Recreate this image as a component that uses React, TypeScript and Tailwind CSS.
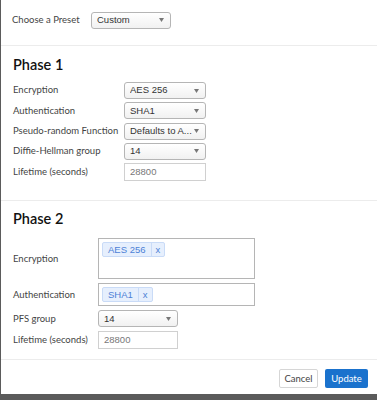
import React from 'react';

const font = { fontFamily: 'Lato, "Liberation Sans", sans-serif' };

const Caret = () => (
  <svg width="5" height="4" viewBox="0 0 5 4" className="flex-shrink-0">
    <path d="M0 0 L5 0 L2.5 4 Z" fill="#777" />
  </svg>
);

const Select: React.FC<{ value: string; width: string }> = ({ value, width }) => (
  <div
    className={`${width} h-[17px] flex items-center justify-between pl-[5px] pr-[6px] border border-[#b5b5b5] rounded-[3px] bg-gradient-to-b from-white to-[#f1f1f1] text-[9.5px] text-[#333] font-['Liberation_Sans',Arial,sans-serif] whitespace-nowrap`}
  >
    <span className="overflow-hidden">{value}</span>
    <Caret />
  </div>
);

const Input: React.FC<{ value: string; width: string }> = ({ value, width }) => (
  <div
    className={`${width} h-[18px] flex items-center pl-[5px] border border-[#d0d0d0] bg-white text-[9.5px] text-[#777] font-['Liberation_Sans',Arial,sans-serif]`}
  >
    {value}
  </div>
);

const Chip: React.FC<{ label: string }> = ({ label }) => (
  <div className="flex h-[15px] items-stretch border border-[#c9dbf7] bg-[#e6effd] rounded-[2px] text-[9.5px] leading-none text-[#4d7fd6] font-['Liberation_Sans',Arial,sans-serif]">
    <span className="flex items-center px-[5px] border-r border-[#c9dbf7]">{label}</span>
    <span className="flex items-center px-[4px]">x</span>
  </div>
);

const Row: React.FC<{ label: string; labelWidth: string; children: React.ReactNode }> = ({ label, labelWidth, children }) => (
  <div className="flex items-center">
    <div className={`${labelWidth} flex-shrink-0 whitespace-nowrap text-[9.5px] text-[#444]`}>{label}</div>
    {children}
  </div>
);

export default function App() {
  return (
    <div className="w-[377px] h-[400px] bg-[#5b5b5b] overflow-hidden" style={font}>
      <div className="ml-[1px] w-[376px] h-[394px] bg-white flex flex-col overflow-hidden">
        {/* Preset */}
        <div className="flex-shrink-0 h-[46px] flex items-center px-[11px] pb-[5px] border-b border-[#ececec]">
          <div className="w-[79px] text-[9.5px] text-[#444]">Choose a Preset</div>
          <Select value="Custom" width="w-[80px]" />
        </div>

        {/* Phase 1 */}
        <div className="flex-shrink-0 px-[12px] pt-[10px] pb-[19px] border-b border-[#ececec]">
          <h2 className="text-[14.5px] leading-[18px] font-semibold text-[#111]">Phase 1</h2>
          <div className="mt-[8px] flex flex-col gap-[3.3px]">
            <Row label="Encryption" labelWidth="w-[111px]">
              <Select value="AES 256" width="w-[82px]" />
            </Row>
            <Row label="Authentication" labelWidth="w-[111px]">
              <Select value="SHA1" width="w-[82px]" />
            </Row>
            <Row label="Pseudo-random Function" labelWidth="w-[111px]">
              <Select value="Defaults to A..." width="w-[82px]" />
            </Row>
            <Row label="Diffie-Hellman group" labelWidth="w-[111px]">
              <Select value="14" width="w-[82px]" />
            </Row>
            <Row label="Lifetime (seconds)" labelWidth="w-[111px]">
              <Input value="28800" width="w-[82px]" />
            </Row>
          </div>
        </div>

        {/* Phase 2 */}
        <div className="flex-shrink-0 px-[12px] pt-[9px] pb-[10px] border-b border-[#ececec]">
          <h2 className="text-[14.5px] leading-[18px] font-semibold text-[#111]">Phase 2</h2>
          <div className="mt-[10px] flex flex-col gap-[4px]">
            <Row label="Encryption" labelWidth="w-[85px]">
              <div className="w-[157px] h-[41px] flex items-start border border-[#b5b5b5] p-[3px] bg-white">
                <Chip label="AES 256" />
              </div>
            </Row>
            <Row label="Authentication" labelWidth="w-[85px]">
              <div className="w-[157px] h-[23px] flex items-start border border-[#b5b5b5] p-[3px] bg-white">
                <Chip label="SHA1" />
              </div>
            </Row>
            <Row label="PFS group" labelWidth="w-[85px]">
              <Select value="14" width="w-[80px]" />
            </Row>
            <Row label="Lifetime (seconds)" labelWidth="w-[85px]">
              <Input value="28800" width="w-[80px]" />
            </Row>
          </div>
        </div>

        {/* Footer */}
        <div className="flex-shrink-0 flex justify-end gap-[7px] pt-[9px] pr-[9px]">
          <button className="h-[19px] w-[39px] border border-[#d6d6d6] rounded-[2px] bg-white text-[9.5px] text-[#444]">
            Cancel
          </button>
          <button className="h-[19px] w-[43px] rounded-[2px] bg-[#1a72cd] text-[9.5px] text-white">
            Update
          </button>
        </div>
      </div>
    </div>
  );
}
